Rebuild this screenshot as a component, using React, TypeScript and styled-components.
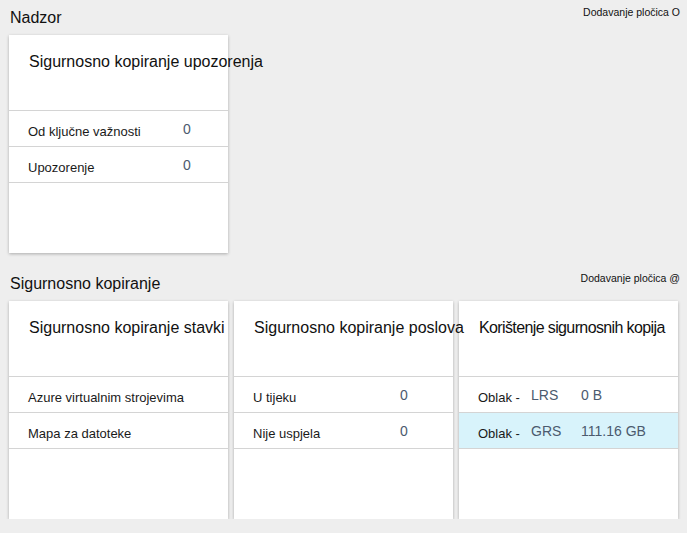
import React from "react";
import styled, { createGlobalStyle } from "styled-components";

const Global = createGlobalStyle`
  html, body { margin: 0; padding: 0; background: #eeeeee; }
  body { font-family: "Liberation Sans", Arial, sans-serif; color: #1a1a1a; }
`;

const Page = styled.div`
  display: flex;
  flex-direction: column;
  gap: 13px;
  width: 687px;
`;

const Section = styled.section`
  display: flex;
  flex-direction: column;
`;

const SectionHeader = styled.div`
  display: flex;
  justify-content: space-between;
  align-items: flex-start;
  height: 35px;
  padding: 0 7px 0 10px;
  box-sizing: border-box;
`;

const SectionTitle = styled.h2`
  margin: 9px 0 0;
  font-size: 16px;
  font-weight: 400;
  line-height: 18px;
  color: #111;
`;

const AddTile = styled.span`
  margin-top: 6px;
  font-size: 10.5px;
  line-height: 13px;
  color: #111;
`;

const CardRow = styled.div`
  display: flex;
  gap: 6px;
  padding-left: 9px;
`;

const Card = styled.div`
  width: 219px;
  height: 218px;
  background: #fff;
  box-shadow: 0 1px 3px rgba(0, 0, 0, 0.28);
  display: flex;
  flex-direction: column;
`;

const CardTitle = styled.div`
  height: 76px;
  box-sizing: border-box;
  padding: 17px 0 0 20px;
  border-bottom: 1px solid #d4d4d4;
`;

const TitleText = styled.span<{ $tight?: boolean }>`
  position: relative;
  z-index: 1;
  font-size: 16px;
  line-height: 20px;
  color: #111;
  white-space: nowrap;
  letter-spacing: ${(p) => (p.$tight ? "-0.62px" : "0")};
`;

const Row = styled.div<{ $cols: string; $highlight?: boolean }>`
  display: grid;
  grid-template-columns: ${(p) => p.$cols};
  align-items: center;
  height: 36px;
  box-sizing: border-box;
  padding-left: 19px;
  border-bottom: 1px solid #d4d4d4;
  background: ${(p) => (p.$highlight ? "#d8f3fb" : "transparent")};
`;

const Label = styled.span`
  font-size: 13px;
  color: #1a1a1a;
  white-space: nowrap;
  padding-top: 5px;
`;

const Value = styled.span`
  font-size: 14px;
  color: #4b5a6e;
  white-space: nowrap;
`;

type RowData = { cells: { text: string; kind: "label" | "value" }[]; highlight?: boolean };

const Tile = ({
  title,
  cols,
  rows,
  tight,
}: {
  title: string;
  cols: string;
  rows: RowData[];
  tight?: boolean;
}) => (
  <Card>
    <CardTitle>
      <TitleText $tight={tight}>{title}</TitleText>
    </CardTitle>
    {rows.map((r, i) => (
      <Row key={i} $cols={cols} $highlight={r.highlight}>
        {r.cells.map((c, j) =>
          c.kind === "label" ? <Label key={j}>{c.text}</Label> : <Value key={j}>{c.text}</Value>
        )}
      </Row>
    ))}
  </Card>
);

const L = (t: string) => ({ text: t, kind: "label" as const });
const V = (t: string) => ({ text: t, kind: "value" as const });

export default function App() {
  return (
    <>
      <Global />
      <Page>
        <Section>
          <SectionHeader>
            <SectionTitle>Nadzor</SectionTitle>
            <AddTile>Dodavanje pločica O</AddTile>
          </SectionHeader>
          <CardRow>
            <Tile
              title="Sigurnosno kopiranje upozorenja"
              cols="155px 1fr"
              rows={[
                { cells: [L("Od ključne važnosti"), V("0")] },
                { cells: [L("Upozorenje"), V("0")] },
              ]}
            />
          </CardRow>
        </Section>
        <Section>
          <SectionHeader>
            <SectionTitle>Sigurnosno kopiranje</SectionTitle>
            <AddTile>Dodavanje pločica @</AddTile>
          </SectionHeader>
          <CardRow>
            <Tile
              title="Sigurnosno kopiranje stavki"
              cols="1fr"
              rows={[
                { cells: [L("Azure virtualnim strojevima")] },
                { cells: [L("Mapa za datoteke")] },
              ]}
            />
            <Tile
              title="Sigurnosno kopiranje poslova"
              cols="147px 1fr"
              rows={[
                { cells: [L("U tijeku"), V("0")] },
                { cells: [L("Nije uspjela"), V("0")] },
              ]}
            />
            <Tile
              title="Korištenje sigurnosnih kopija"
              tight
              cols="53px 50px 1fr"
              rows={[
                { cells: [L("Oblak -"), V("LRS"), V("0 B")] },
                { cells: [L("Oblak -"), V("GRS"), V("111.16 GB")], highlight: true },
              ]}
            />
          </CardRow>
        </Section>
      </Page>
    </>
  );
}
